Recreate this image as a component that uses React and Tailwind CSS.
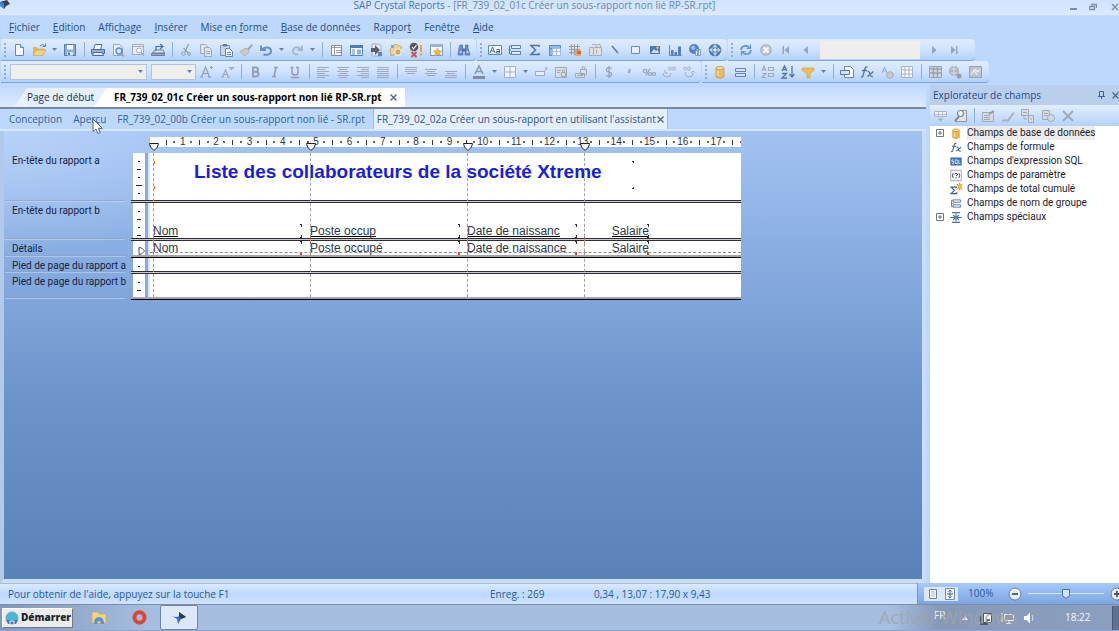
import React, { useState } from "react";
import clsx from "clsx";

const BLUE = "#4a78b8";
const DARK = "#2f5a94";
const GRAY = "#98a1ae";

// Lines of text as drawn by the alignment icons
const lines = (rows, color = GRAY) => (
  <g stroke={color} strokeWidth="1">
    {rows.map(([y, x1, x2]) => (
      <path key={y} d={`M${x1} ${y}.5H${x2}`} />
    ))}
  </g>
);

// 16x16 drawings
const ICONS = {
  new: (
    <>
      <path d="M4.5 2.5h5l3 3v8h-8z" fill="#fff" stroke={BLUE} />
      <path d="M9.5 2.5v3h3" fill="#cfe0f7" stroke={BLUE} />
    </>
  ),
  open: (
    <>
      <path d="M2 13V5h4l1 1.500h6V9z" fill="#e8b040" />
      <path d="M2 13.500 5 8h10l-3 5.500z" fill="#fbd26a" stroke="#d79a28" strokeWidth=".7" />
      <path d="M9 4q3-3 5 0M14.500 1.500V4.500h-3" fill="none" stroke={BLUE} />
    </>
  ),
  save: (
    <>
      <path d="M2.500 2.500h11v11h-11z" fill="#7fa3d6" stroke="#44699f" />
      <path d="M5 3h6v4.500H5z" fill="#fff" />
      <path d="M5 10h6v3.500H5z" fill="#dfe8f5" />
      <path d="M6 10.500h2v2.500H6z" fill="#44699f" />
    </>
  ),
  print: (
    <>
      <path d="M5 2.500h7l-1.500 5h-7z" fill="#fff" stroke={DARK} />
      <path d="M1.500 7.500h13v4h-13z" fill="#8ba5cc" stroke={DARK} />
      <path d="M3.500 10.500h9l1 3h-11z" fill="#e6eefa" stroke={DARK} />
    </>
  ),
  preview: (
    <>
      <path d="M3.500 2.500h6l3 3v8h-9z" fill="#eef5ff" stroke="#7f9fce" />
      <circle cx="9" cy="9" r="3" fill="#cfe4fb" stroke={BLUE} strokeWidth="1.300" />
      <path d="m11 11.500 3 3" stroke="#c58b3a" strokeWidth="1.600" />
    </>
  ),
  previewGray: (
    <>
      <path d="M2.500 2.500h11v10h-11z" fill="#eef1f5" stroke={GRAY} />
      <path d="M3 4.500h10" stroke={GRAY} />
      <circle cx="9" cy="8.500" r="2.500" fill="#fff" stroke={GRAY} />
      <path d="m11 10.500 3 3" stroke={GRAY} strokeWidth="1.500" />
    </>
  ),
  export: (
    <>
      <path d="M2.500 11 5 8h8l1.500 3z" fill="#dce6f4" stroke="#5c6f8c" />
      <path d="M1.500 11.500h13v2h-13z" fill="#8fa3c2" stroke="#5c6f8c" />
      <path d="M6 9V4.500h6M10 2l3 2.500L10 7" fill="none" stroke={DARK} strokeWidth="1.200" />
    </>
  ),
  cut: (
    <g fill="none" stroke="#8b97a8">
      <path d="M10.500 2 7 10M5.500 6l5 5" strokeWidth="1.300" />
      <circle cx="5.500" cy="11.500" r="1.800" />
      <circle cx="11" cy="12" r="1.500" />
    </g>
  ),
  copy: (
    <g fill="#e3e4e8" stroke={GRAY}>
      <path d="M2.500 2.500h5l2 2v7h-7z" />
      <path d="M6.500 5.500h5l2 2v7h-7z" />
      <path d="M8 9.500h4M8 11.500h4" />
    </g>
  ),
  paste: (
    <>
      <path d="M2.500 3.500h9v10h-9z" fill="#c9d5e8" stroke="#6d84a9" />
      <path d="M5 2h4v2.500H5z" fill="#55698c" />
      <path d="M7.500 6.500h4l3 3v5h-7z" fill="#fff" stroke={BLUE} />
      <path d="M9 10.500h4M9 12.500h4" stroke={BLUE} />
    </>
  ),
  brush: (
    <>
      <path d="m9 7 4.500-5 1.500 1.500L10.500 8.500z" fill="#9a9faa" />
      <path d="M2 9.500 8 6l3.500 3.500L6.500 14z" fill="#d0c8ba" stroke="#aaa79f" />
    </>
  ),
  undo: <path d="M5.500 12.500c5 1 8-1 7.500-4C12.500 5 8 4.500 4 7M3 3.500V8h5" fill="none" stroke="#5580bd" strokeWidth="1.900" />,
  redo: <path d="M9 12.500c-5 0-6-3-4.500-5.500C6 4.500 9 5 12 7M13 3.500V8H8.500" fill="none" stroke="#a5afbe" strokeWidth="1.900" />,
  grid: (
    <>
      <path d="M3.500 3.500h10v10h-10z" fill="#fff" stroke="#7d7c80" />
      <path d="M3 5.500h11M6.500 3v11M8 8.500h5M8 10.500h5" stroke="#8c8f98" />
    </>
  ),
  explorer: (
    <>
      <path d="M2.500 3.500h12v10h-12z" fill="#fff" stroke={BLUE} />
      <path d="M2 3h13v3H2z" fill="#3c68ab" />
      <path d="M4 8h3M4 10h3M4 12h3" stroke={BLUE} />
      <path d="M9 7.500h4v5H9z" fill="#7fa8df" />
    </>
  ),
  dbArrow: (
    <>
      <path d="M4 2h7l2 2v10H4z" fill="#e9edf3" stroke="#9aa5b5" />
      <path d="M3 6h4V3l5 5-5 5v-3H3z" fill="#4a4a50" />
      <path d="M10 10h4v4h-4z" fill={BLUE} />
    </>
  ),
  wizard: (
    <>
      <path d="m2 7 5-5 7 3-4 6-7 3z" fill="#f0cf86" stroke="#b38d48" strokeWidth=".7" />
      <circle cx="10" cy="10" r="3.300" fill="#e0a030" stroke="#fff" />
      <path d="M3 3h3v3H3z" fill="#7f96bb" />
    </>
  ),
  check: (
    <>
      <circle cx="6" cy="5" r="4.300" fill="#3d3f42" />
      <path d="m4 5 1.500 2L8.500 3" fill="none" stroke="#fff" strokeWidth="1.200" />
      <path d="m3.500 10 5 5M8.500 10l-5 5" stroke="#d83a27" strokeWidth="2" />
      <path d="M13 3v7M13 11.500v2" stroke="#e69a1e" strokeWidth="2" />
    </>
  ),
  starWindow: (
    <>
      <path d="M2.500 2.500h12v11h-12z" fill="#fff" stroke="#6b87b5" />
      <path d="M2 2h13v3H2z" fill="#8fa9d2" />
      <path d="m9.500 6 1.300 2.600 2.900.4-2.100 2 .5 2.900-2.600-1.400-2.600 1.400.5-2.900-2.100-2 2.900-.4z" fill="#f2b21d" stroke="#d98a15" strokeWidth=".5" />
    </>
  ),
  find: (
    <>
      <path d="M4 3h2.500v3L7 13H2l1-7zM9.500 3H12v3l2 7H9l.5-7z" fill="#5f80b8" stroke={DARK} strokeWidth=".7" />
      <path d="M6 6.500h4v3H6z" fill="#3b5f99" />
      <path d="M3.500 10h2M10.500 10h2" stroke="#cfe0f7" strokeWidth="1.500" />
    </>
  ),
  textObj: (
    <>
      <path d="M1.500 3.500h13v9h-13z" fill="#fff" stroke={BLUE} />
      <path d="m3 11 2.500-6L8 11M4 9h3" fill="none" stroke={DARK} />
      <path d="M9.500 7.500h3V11h-3V9.500h3" fill="none" stroke={DARK} />
    </>
  ),
  group: (
    <>
      <path d="M4.500 3.500h9v3h-9zM4.500 9.500h9v3h-9z" fill="#e6effb" stroke="#4b6da4" />
      <path d="M4 8H1.500M2.500 4v8M4.500 4H2.500M4.500 12H2.500" stroke="#4b6da4" />
    </>
  ),
  sigma: <path d="M12 5V3.500H4L8.500 8 4 12.500h8V11" fill="none" stroke="#41618f" strokeWidth="1.500" />,
  crossTab: (
    <>
      <path d="M2.500 6.500v7h3v-7zM2.500 3.500h11v3h-11z" fill="#8fb2e3" stroke={BLUE} />
      <path d="M5.500 6.500h8v7h-8zM5.500 9.500h8M9.500 6.500v7" fill="#fff" stroke="#9ab6de" />
    </>
  ),
  olap: (
    <>
      <path d="M2 4.500h11M2 7.500h11M2 10.500h11M4.500 2v11M7.500 2v11M10.500 2v11" stroke="#a08a7c" />
      <path d="M8 8h6v6H8z" fill="#f0a52a" />
      <path d="M10 9h4v3h-4z" fill="#dd4c2c" />
    </>
  ),
  cubeGray: (
    <g fill="#e2dfdb" stroke="#a8a5a3">
      <path d="M2.500 5.500h4v8h-4z" />
      <path d="M6.500 5.500h8v8h-8zM5 2.500h4l1 3M10 2.500h3l1 3M9.500 7.500v4" />
    </g>
  ),
  line: <path d="m5 4 6 7" stroke="#4667a3" strokeWidth="1.500" />,
  box: <path d="M4.500 4.500h8v7h-8z" fill="#eaf3ff" stroke="#557db8" />,
  picture: (
    <>
      <path d="M3 4h10v8H3z" fill="#3f6299" />
      <path d="m4 11 3-4 2 2 1.500-1.500L12 11z" fill="#cfe0f5" />
      <circle cx="10.500" cy="5.800" r="1.200" fill="#f4c63c" />
    </>
  ),
  chart: (
    <>
      <path d="M2.500 3v10.500h12" fill="none" stroke={BLUE} />
      <path d="M4 8h2.500v5H4zM7.500 10H10v3H7.500zM11 4.500h3V13h-3z" fill="#416fb5" />
    </>
  ),
  map: (
    <>
      <circle cx="7" cy="7" r="5" fill="#3e71b6" />
      <path d="M4 5q3-3 4 0t-3 3zM9 7l3 1-2 3z" fill="#9bbbe3" />
      <path d="M8.500 8.500h2v5h-2zM11.500 7.500h2v6h-2z" fill="#fff" stroke="#587cae" strokeWidth=".8" />
    </>
  ),
  flash: (
    <>
      <circle cx="8" cy="8" r="6.300" fill="#3f679d" />
      <path d="m8 2 2.500 3.500h-5zM8 14l-2.500-3.500h5zM2 8l3.500-2.500v5zM14 8l-3.500 2.500v-5z" fill="#b9cfeb" />
      <circle cx="8" cy="8" r="1.800" fill="#e8f1fc" />
    </>
  ),
  refresh: (
    <g fill="none" stroke="#568bc9" strokeWidth="1.800">
      <path d="M3 8q1-5 6-4l3 2M13 8q-1 5-6 4l-3-2" />
      <path d="M12.500 2.500V6.500h-4M3.500 13.500V9.500h4" strokeWidth="1.200" />
    </g>
  ),
  stop: (
    <>
      <circle cx="8" cy="8" r="5.800" fill="#a3a8b0" />
      <circle cx="8" cy="8" r="4.500" fill="#c3c6cc" />
      <path d="m5.500 5.500 5 5M10.500 5.500l-5 5" stroke="#fff" strokeWidth="1.800" />
    </>
  ),
  first: <path d="M4.500 4v8H6V4zM11 4v8L6.500 8z" fill="#8f9bb0" />,
  prev: <path d="M10 4v8L5.500 8z" fill="#8f9bb0" />,
  next: <path d="M6 4v8l4.500-4z" fill="#8f9bb0" />,
  last: <path d="M5 4v8l4.500-4zM10 4v8h1.500V4z" fill="#8f9bb0" />,
  fontUp: <path d="m2.500 13 4-10 4 10M4 9.500h5M1 13h3M9 13h3M12.500 2v3M11 3.500h3" fill="none" stroke="#8893a2" strokeWidth="1.200" />,
  fontDown: <path d="m3.500 13 3-7 3 7M5 10.500h3M2 13h3M8 13h3M10.500 3.500h4l-2 2z" fill="none" stroke="#98a1ae" strokeWidth="1.100" />,
  bold: <path d="M5 3.500h3.500q2.500 0 2.500 2T8.500 7.800H6M8.500 7.800q3 0 3 2.300T8.500 12.500H5M6 3.500v9" fill="none" stroke="#8a94a2" strokeWidth="1.900" />,
  italic: <path d="M7 3.500h4M5 12.500h4M9 3.500l-2 9" fill="none" stroke="#8a94a2" strokeWidth="1.600" />,
  underline: <path d="M3.500 3.500h3M9 3.500h3M5 3.500v5q0 2.500 3 2.500t3-2.500v-5M4 13.500h8" fill="none" stroke="#8a94a2" strokeWidth="1.400" />,
  alignL: lines([[3, 2, 14], [5, 2, 10], [7, 2, 14], [9, 2, 10], [11, 2, 14], [13, 2, 10]]),
  alignC: lines([[3, 2, 14], [5, 4, 12], [7, 2, 14], [9, 4, 12], [11, 2, 14], [13, 4, 12]]),
  alignR: lines([[3, 2, 14], [5, 6, 14], [7, 2, 14], [9, 6, 14], [11, 2, 14], [13, 6, 14]]),
  justify: lines([[3, 2, 14], [5, 2, 14], [7, 2, 14], [9, 2, 14], [11, 2, 14], [13, 2, 14]]),
  top: lines([[3, 2, 14], [5, 2, 14], [7, 2, 14], [9, 4, 12]]),
  middle: lines([[5, 2, 14], [7, 4, 12], [9, 2, 14], [11, 4, 12]]),
  bottom: lines([[7, 2, 14], [9, 4, 12], [11, 2, 14], [13, 2, 14]]),
  fontColor: (
    <>
      <path d="m4 10 4-8 4 8M5.500 7.500h5" fill="none" stroke="#7f8a99" strokeWidth="1.600" />
      <path d="M2 12h12v3H2z" fill="#77818f" />
    </>
  ),
  borders: <path d="M2.500 2.500h11v11h-11zM8 3v10M3 8h10" fill="#f5f8fc" stroke="#9fa9b7" />,
  suppress: <path d="M2.500 7.500h9v4h-9zM11 8l3-4M12 4h3" fill="#eef1f5" stroke={GRAY} />,
  lock: (
    <g stroke={GRAY} fill="#dcdddf">
      <path d="M2.500 3.500h11v10h-11z" />
      <path d="M4 6.500h4M4 8.500h3M8.500 8.500h4v4h-4zM9.500 8V6h2v2" />
    </g>
  ),
  lockSize: (
    <g stroke={GRAY} fill="#dcdddf">
      <path d="M2.500 9.500h9v4h-9zM7.500 5.500h6v5h-6zM9 5V3h3v2" />
      <path d="M4 11.500h6" />
    </g>
  ),
  dollar: <path d="M11 5q-1-1.500-3-1.500T5.500 5.500 8 8t2.500 2.500-2.500 2T5 11M8 2v12" fill="none" stroke="#8c96a5" strokeWidth="1.200" />,
  comma: <path d="M8.500 5v2L7.500 9" fill="none" stroke="#8c96a5" strokeWidth="1.800" />,
  percent: (
    <g fill="none" stroke="#8c96a5" strokeWidth="1.100">
      <circle cx="4" cy="7" r="1.700" />
      <circle cx="9" cy="10" r="1.500" />
      <circle cx="13" cy="10" r="1.500" />
      <path d="m9 4.500-4 7" />
    </g>
  ),
  decUp: (
    <g fill="none" stroke="#a0a8b4">
      <circle cx="9" cy="4.500" r="1.500" />
      <circle cx="13" cy="4.500" r="1.500" />
      <path d="M4 6v3M2 9q0 4 4 4t4-4M4 9h3" />
    </g>
  ),
  decDown: (
    <g fill="none" stroke="#a0a8b4">
      <circle cx="4" cy="4.500" r="1.500" />
      <circle cx="8" cy="4.500" r="1.500" />
      <path d="M4 8q0 5 4 5t4-4M10 9l2-2 2 2" />
    </g>
  ),
  database: (
    <>
      <path d="M4 4v9q4 2.500 8 0V4z" fill="#f3b544" stroke="#cf8a23" strokeWidth=".8" />
      <ellipse cx="8" cy="4" rx="4" ry="1.700" fill="#fbe0a0" stroke="#cf8a23" strokeWidth=".8" />
      <path d="M6 7v5" stroke="#fde6b0" strokeWidth="1.200" />
    </>
  ),
  section: <path d="M3.500 4.500h10v3h-10zM3.500 9.500h10v3h-10z" fill="#d9e5f6" stroke="#5574a4" />,
  sortGroup: (
    <g fill="none" stroke="#98a1ae" strokeWidth="1.100">
      <path d="m2 7 2-5 2 5M3 5.500h2M2 9.500h4l-4 4h4" />
      <path d="M8.500 3.500h5v3h-5zM8.500 9.500h5v3h-5z" />
    </g>
  ),
  sort: <path d="m2 7 2.500-5L7 7M3 5.500h3M2 9.500h4.500l-4.500 4.500h5M12 2v10M9.500 10l2.500 3 2.500-3" fill="none" stroke="#3d669f" strokeWidth="1.300" />,
  filter: <path d="M2 4h12v2.500L10 9.500V14H7V9.500L2 6.500z" fill="#f3b82e" stroke="#d4942a" strokeWidth=".6" />,
  sectionExpert: (
    <>
      <path d="M5.500 2.500h6l3 3v8h-9z" fill="#fff" stroke="#5b78a6" />
      <path d="M1.500 6.500h9v4h-9z" fill="#d6e3f6" stroke="#3f659e" />
    </>
  ),
  fx: <path d="M2 13q2 .5 2.500-3L6 4.500Q6.500 2.500 8.500 3M3 6.500h5M8.500 7.500q2-.5 2.500 2.500t3 2.500M14.500 7.500l-6 5" fill="none" stroke="#41618f" strokeWidth="1.300" />,
  highlight: (
    <>
      <path d="m3 9 2.500-6L8 9M4 7h3" fill="none" stroke="#98a1ae" />
      <circle cx="11" cy="11" r="3.300" fill="#c9c6c0" stroke="#aaa7a2" />
    </>
  ),
  template: <path d="M2.500 2.500h11v11h-11zM2.500 6h11M2.500 10h11M6 2.500v11M10 2.500v11" fill="#fff" stroke="#a3acba" />,
  sheet: (
    <>
      <path d="M2.500 2.500h12v11h-12z" fill="#d4d6db" stroke="#8f98a6" />
      <path d="M2.500 5h12M6.500 3v10M10.500 3v10M2.500 9h12" stroke="#8f98a6" strokeWidth="1.400" />
    </>
  ),
  globeGray: (
    <>
      <circle cx="7" cy="7" r="5" fill="#a7abb2" />
      <path d="M4 5h6M4 9h6M7 2v10" stroke="#dcdfe4" />
      <circle cx="12" cy="12" r="2.500" fill="#8f949c" />
    </>
  ),
  replace: (
    <>
      <path d="M2.500 2.500h12v11h-12z" fill="#b9bdc5" stroke="#9299a4" />
      <path d="m4 11 3-5 3 5M8 5l3 3 2-3" fill="none" stroke="#f1f3f6" strokeWidth="1.300" />
    </>
  ),
  insertField: (
    <>
      <path d="M2.500 3.500h12v5h-12z" fill="#f2f4f7" stroke="#a5abb5" />
      <path d="M3 6.500h11M6.500 4v4M10.500 4v4" stroke="#b5bac3" />
      <path d="M5.500 10.500h6l-3 3z" fill="#a0a7b2" />
    </>
  ),
  browse: (
    <>
      <path d="M9 2.500h5.500v11H3" fill="#e4e7eb" stroke="#85898f" />
      <circle cx="8.500" cy="5.500" r="3" fill="#f7f8fa" stroke="#77797e" strokeWidth="1.200" />
      <path d="M7 8.500 3 13" stroke="#77797e" strokeWidth="2" />
    </>
  ),
  newField: (
    <>
      <path d="M2.500 4.500h11v9h-11z" fill="#dadcdf" stroke={GRAY} />
      <path d="M4 7.500h6M4 9.500h6M4 11.500h6" stroke={GRAY} />
      <path d="m9 6 5-3" stroke="#868e9a" strokeWidth="1.600" />
    </>
  ),
  edit: <path d="M2 12.500h6l6-8" fill="none" stroke="#a3a9b2" strokeWidth="2" />,
  rename: (
    <g fill="#dadcdf" stroke={GRAY}>
      <path d="M1.500 1.500h7v6h-7zM8.500 7.500h5v7h-5z" />
      <path d="M3 4.500h4M10 11h2M4 8v3h3" />
    </g>
  ),
  duplicate: (
    <g fill="#d8dadd" stroke={GRAY}>
      <path d="M2.500 2.500h7v9h-7z" />
      <path d="M4 5.500h4M4 7.500h4" />
      <circle cx="11" cy="10" r="3.500" />
    </g>
  ),
  del: <path d="m3 3 10 10M13 3 3 13" stroke="#9aa0a9" strokeWidth="1.900" />,
  sql: (
    <>
      <path d="M1 3h14v10H1z" fill="#3f74b8" />
      <path d="M5 6H3v2h2v2.500H3M7 6h2.500v4.500H7zM9 10l1 1.500M11.500 6v4.500h2" fill="none" stroke="#e4eefb" />
    </>
  ),
  param: (
    <>
      <path d="M1.500 1.500h13v13h-13z" fill="#fdfdff" stroke="#8f97ab" />
      <path d="M4.500 5q-2 3 0 6M11.500 5q2 3 0 6M6.500 6Q8 4.500 9.500 6T8 8.500M8 10v1.500" fill="none" stroke="#3d4461" strokeWidth="1.200" />
    </>
  ),
  total: (
    <>
      <path d="M8.500 6V5H2l4 4-4 4h7v-1.500" fill="none" stroke="#3f5f91" strokeWidth="1.500" />
      <path d="M10 2h5v5h-5z" fill="#f5b52b" />
      <path d="M9 1l1.500 1.500M16 1l-1.500 1.500M9 8l1.500-1.500M16 8l-1.500-1.500M12.500 0v2M12.500 7v2" stroke="#d85c2a" strokeWidth="1.200" />
    </>
  ),
  special: (
    <>
      <path d="M3 2h10M3 14h10M8 3v10" stroke="#55709b" strokeWidth="1.300" />
      <path d="M1 8h14M4.500 5l3 3-3 3M11.500 5l-3 3 3 3" fill="none" stroke="#3f659e" strokeWidth="1.500" />
      <circle cx="8" cy="8" r="2.200" fill="#5f86bd" />
    </>
  ),
};

const Icon = ({ name }) => (
  <svg viewBox="0 0 16 16" className="w-4 h-4 shrink-0 opacity-85" aria-hidden="true">
    {ICONS[name]}
  </svg>
);

const IconButton = ({ name }) => (
  <button aria-label={name} className="w-5 h-5 shrink-0 flex items-center justify-center">
    <Icon name={name} />
  </button>
);

const Arrow = () => (
  <button aria-label="menu" className="w-[11px] h-5 shrink-0 flex items-center justify-center">
    <svg viewBox="0 0 5 3" className="w-[5px] h-[3px]">
      <path d="M0 0h5L2.500 3z" fill="#6580a8" />
    </svg>
  </button>
);

const Sep = () => (
  <span className="w-2 shrink-0 flex justify-center">
    <span className="w-px h-[15px] bg-[#8fb0dc]" />
  </span>
);

const Grip = () => (
  <span className="w-2 shrink-0 flex flex-col items-center gap-[2px]">
    {[0, 1, 2, 3].map((i) => (
      <span key={i} className="w-[2px] h-[2px] bg-[#8eabd6]" />
    ))}
  </span>
);

// "|" is a separator and "v" a small menu arrow
const Tools = ({ items }) =>
  items.split(" ").map((item, i) => {
    if (item === "|") return <Sep key={i} />;
    if (item === "v") return <Arrow key={i} />;
    return <IconButton key={i} name={item} />;
  });

const Bar = ({ children }) => (
  <div className="h-[22px] shrink-0 flex items-center pr-[2px] rounded-r-[4px] border-b border-[#7fa6dc] bg-gradient-to-b from-[#dfecff] via-[#cfe2ff] to-[#b3d0fb]">
    {children}
  </div>
);

const MENUS = [
  ["", "F", "ichier"],
  ["", "E", "dition"],
  ["Affic", "h", "age"],
  ["", "I", "nsérer"],
  ["Mise en ", "f", "orme"],
  ["", "B", "ase de données"],
  ["Rappor", "t", ""],
  ["Fenêt", "r", "e"],
  ["", "A", "ide"],
];

const FIELDS = [
  { label: "Champs de base de données", icon: "database", node: true },
  { label: "Champs de formule", icon: "fx" },
  { label: "Champs d'expression SQL", icon: "sql" },
  { label: "Champs de paramètre", icon: "param" },
  { label: "Champs de total cumulé", icon: "total" },
  { label: "Champs de nom de groupe", icon: "group" },
  { label: "Champs spéciaux", icon: "special", node: true },
];

function Header() {
  return (
    <header className="shrink-0">
      <div className="relative h-4 flex items-start justify-center bg-gradient-to-b from-[#cfe2ff] to-[#dceaff] border-b border-[#c6dbf8]">
        <svg viewBox="0 0 10 9" className="absolute left-0 top-0 w-[10px] h-[9px]" aria-hidden="true">
          <path d="M0 2 7 0l3 4-4 2-2 3z" fill="#3c3f46" />
          <path d="M0 2l4 1v6L0 6z" fill="#3f86d8" />
        </svg>
        <h1 className="mr-[50px] text-[10px] leading-[10px] text-[#6d87ad]">
          <span className="text-[#4673b3]">SAP Crystal Reports</span> - [FR_739_02_01c Créer un sous-rapport non lié RP-SR.rpt]
        </h1>
        <div className="absolute right-0 top-0 flex text-[#7c8da8]">
          <button aria-label="Réduire" className="w-5 h-[14px] flex items-end justify-center pb-1">
            <span className="w-[7px] h-[2px] bg-[#7c8da8]" />
          </button>
          <button aria-label="Restaurer" className="w-5 h-[14px] flex items-center justify-center">
            <svg viewBox="0 0 8 8" className="w-2 h-2">
              <path d="M2 1.500h5.500V5M.5 3.500h5v3h-5z" fill="none" stroke="currentColor" strokeWidth="1.300" />
            </svg>
          </button>
          <button aria-label="Fermer" className="w-4 h-[14px] flex items-center justify-end">
            <svg viewBox="0 0 8 8" className="w-2 h-2">
              <path d="m1 1 6 6M7 1 1 7" stroke="currentColor" strokeWidth="1.500" />
            </svg>
          </button>
        </div>
      </div>

      <nav className="h-[23px] flex items-center gap-[13px] pl-[9px] text-[10px] text-[#274c86]">
        {MENUS.map(([before, key, after]) => (
          <button key={before + key + after}>
            {before}
            <u>{key}</u>
            {after}
          </button>
        ))}
      </nav>

      <div className="flex gap-[1px] pl-[1px]">
        <Bar>
          <Grip />
          <Tools items="new open v save | print preview previewGray export | cut copy paste brush undo v redo v | grid explorer dbArrow wizard check starWindow | find" />
        </Bar>
        <Bar>
          <Grip />
          <Tools items="textObj group sigma crossTab olap cubeGray line box picture chart map flash" />
        </Bar>
        <Bar>
          <Grip />
          <Tools items="refresh stop first prev" />
          <input aria-label="Page" className="w-[100px] h-[18px] mx-1 bg-[#eeeeec]" />
          <Tools items="next last" />
          <span className="w-[9px]" />
        </Bar>
      </div>

      <div className="flex gap-[1px] pl-[1px]">
        <Bar>
          <Grip />
          <select aria-label="Police" className="w-[137px] h-4 ml-[1px] bg-[#eeeeec] border border-[#b4c3d8] appearance-none" />
          <span className="-ml-[12px] mr-[5px] flex pointer-events-none">
            <Arrow />
          </span>
          <select aria-label="Taille" className="w-[45px] h-4 bg-[#eeeeec] border border-[#b4c3d8] appearance-none" />
          <span className="-ml-[12px] mr-[2px] flex pointer-events-none">
            <Arrow />
          </span>
          <Tools items="fontUp fontDown | bold italic underline | alignL alignC alignR justify | top middle bottom | fontColor v borders v suppress lock lockSize | dollar comma percent decUp decDown" />
        </Bar>
        <Bar>
          <Grip />
          <Tools items="database section | sortGroup sort filter v | sectionExpert fx highlight template | sheet globeGray replace" />
          <span className="w-[2px]" />
        </Bar>
      </div>
    </header>
  );
}

function DocumentTabs() {
  return (
    <div className="h-[25px] shrink-0 flex items-end pl-[14px] text-[10px] leading-[14px] border-b-2 border-[#7c8899] bg-gradient-to-b from-[#bcd8ff] to-[#dceaff]">
      <button className="h-[19px] flex">
        <svg viewBox="0 0 13 19" className="w-[13px] h-[19px]">
          <path d="M0 19 13 0v19z" fill="#e9f2ff" />
        </svg>
        <span className="h-[19px] pt-[2px] text-[#1d2c46] bg-[#e4efff]">Page de début</span>
      </button>
      <button className="h-[19px] flex font-bold text-black">
        <svg viewBox="0 0 20 19" className="w-5 h-[19px]">
          <path d="M0 0h20v19H0z" fill="#e4efff" />
          <path d="M0 19 11 2q1-2 4-2h5v19z" fill="#fff" />
        </svg>
        <span className="h-[19px] pt-[2px] bg-white">FR_739_02_01c Créer un sous-rapport non lié RP-SR.rpt</span>
        <span className="h-[19px] w-[23px] flex items-center justify-center bg-white">
          <CloseMark />
        </span>
      </button>
    </div>
  );
}

const CloseMark = () => (
  <svg viewBox="0 0 7 7" className="w-[7px] h-[7px]">
    <path d="m.5.5 6 6M6.500.5l-6 6" stroke="#4d6386" strokeWidth="1.200" />
  </svg>
);

function ViewTabs({ active, onSelect }) {
  const tabs = [
    "Conception",
    "Aperçu",
    "FR_739_02_00b Créer un sous-rapport non lié - SR.rpt",
    "FR_739_02_02a Créer un sous-rapport en utilisant l'assistant",
  ];
  return (
    <div className="relative h-[22px] shrink-0 flex items-start gap-[5px] pl-[6px] text-[10px] leading-[14px] text-[#33609f] bg-[#bcd8ff] border-b-2 border-[#d6e6fd]">
      {tabs.map((tab, i) => (
        <button
          key={tab}
          onClick={() => onSelect(i)}
          className={clsx(
            "h-5 flex items-center gap-px px-[3px] whitespace-nowrap",
            active === i && "bg-[#e3eeff] border-l border-r border-[#9dbce8] text-[#2d5592]"
          )}
        >
          {tab}
          {i === 3 && <CloseMark />}
        </button>
      ))}
      {/* Mouse pointer */}
      <svg viewBox="0 0 12 17" className="absolute left-[92px] top-[9px] w-3 h-[17px] z-10">
        <path d="M1 1v12.500l3-2.500 2 4.500 2.300-1-2-4.200h4z" fill="#fff" stroke="#5b6675" />
      </svg>
    </div>
  );
}

// One report field with its corner marks
const Field = ({ children, className, hot }) => (
  <span className={clsx("relative h-[14px] shrink-0 text-[12px] leading-[14px] text-[#2f3646] whitespace-nowrap", className)}>
    {children}
    <i className="absolute left-0 top-0 w-px h-[3px] bg-[#e0762e]" />
    <i className="absolute left-0 bottom-0 w-px h-[3px] bg-[#e0762e]" />
    <i className="absolute right-0 top-0 w-[2px] h-[3px] border-t border-r border-[#333]" />
    <i className={clsx("absolute right-0 bottom-0 w-[2px] h-[3px]", hot ? "bg-[#e0402e]" : "border-b border-r border-[#333]")} />
  </span>
);

const FieldRow = ({ names, underline, hot }) => (
  <div className="flex pl-[3px]">
    <Field className="w-[149px] mr-2" hot={hot}>
      <span className={underline}>{names[0]}</span>
    </Field>
    <Field className="w-[150px] mr-[7px]" hot={hot}>
      <span className={underline}>{names[1]}</span>
    </Field>
    <Field className="w-[110px] mr-[7px]" hot={hot}>
      <span className={underline}>{names[2]}</span>
    </Field>
    <Field className="w-[65px] text-right" hot={hot}>
      <span className={underline}>{names[3]}</span>
    </Field>
  </div>
);

const RULE = {
  even: "h-[3px] bg-[#cfcbd0] border-y border-[#2e2c33]",
  thick: "h-[3px] bg-[#a7a5aa] border-b border-black",
};

function Section({ label, height, rule = "even", marks = [], children }) {
  return (
    <section>
      <div className={clsx("flex", height)}>
        <div className="w-[128px] shrink-0 pt-[2px] pl-[7px] text-[10px] leading-3 text-[#14233f] font-[Roboto,'Liberation_Sans',sans-serif]">
          {label}
        </div>
        <div className="w-3 shrink-0 flex flex-col items-center gap-[7px] pt-2 overflow-hidden bg-white">
          {marks.map((w, i) => (
            <span key={i} className={clsx("h-px shrink-0 bg-[#222]", w)} />
          ))}
        </div>
        <div className="w-[5px] shrink-0 bg-[#86abe4] border-r-2 border-[#dbe8fb]" />
        <div className="flex-1 bg-white">{children}</div>
      </div>
      <div className="flex">
        <div className="w-[120px] mr-[6px] h-[2px] border-t border-b border-t-[#8f9fc0]/60 border-b-[#c4d8f4]/60" />
        <div className={clsx("flex-1", RULE[rule])} />
      </div>
    </section>
  );
}

const Marker = () => (
  <svg viewBox="0 0 10 10" className="w-[10px] h-[10px]">
    <path d="M.5 2.500h9L8.500 6 5 9.500 1.500 6z" fill="#fff" stroke="#222" />
  </svg>
);

function Ruler() {
  const dot = <span className="w-[2px] h-[2px] bg-[#666]" />;
  return (
    <div className="ml-[145px] w-[591px] h-[10px] relative">
      <div className="h-full overflow-hidden bg-white">
        <div className="w-[612px] h-full flex items-center pl-3">
          <div className="w-[600px] shrink-0 grid grid-cols-18 text-[10px] leading-[10px] text-[#333]">
            {Array.from({ length: 18 }, (_, i) => (
              <div key={i} className="grid grid-cols-4 items-center justify-items-center">
                <span className="w-px h-[5px] bg-[#333]" />
                {dot}
                {i < 17 && <span className="w-2 flex justify-center">{i + 1}</span>}
                {i < 17 && dot}
              </div>
            ))}
          </div>
        </div>
      </div>
      <div className="absolute left-[-1px] top-1 flex">
        <span className="w-[157px]"><Marker /></span>
        <span className="w-[157px]"><Marker /></span>
        <span className="w-[117px]"><Marker /></span>
        <Marker />
      </div>
    </div>
  );
}

function Design() {
  const S = "w-[2px]";
  const M = "w-1";
  return (
    <main className="flex-1 pt-[6px] border-[#c9dcf8] border-x-4 border-b-4 border-l-[#b3c9ea] bg-[radial-gradient(ellipse_260px_120px_at_0_0,#bdd6fbcc,transparent),linear-gradient(#a3c2f2,#7ca2d8_42%,#6c93ca_60%,#5a82b8)] font-['Liberation_Sans',Arial,sans-serif]">
      <div className="ml-[1px]">
        <Ruler />
        <div className="relative w-[736px] mt-[6px]">
          <Section label="En-tête du rapport a" height="h-[47px]" marks={[S, M, S, "w-[6px]", S]}>
            <div className="pt-2 pl-1">
              <div className="relative w-[480px] h-[28px] pl-10 font-bold text-[19px] leading-[22px] text-[#1a1fd6] whitespace-nowrap">
                Liste des collaborateurs de la société Xtreme
                <i className="absolute left-0 top-0 w-px h-[3px] bg-[#e0762e]" />
                <i className="absolute left-0 bottom-0 w-px h-[3px] bg-[#e0762e]" />
                <i className="absolute right-0 top-0 w-[2px] h-[2px] border-t border-r border-[#333]" />
                <i className="absolute right-0 bottom-0 w-[2px] h-[2px] border-b border-r border-[#333]" />
              </div>
            </div>
          </Section>
          <Section label="En-tête du rapport b" height="h-[35px]" marks={[S, M, S, M]}>
            <div className="pt-[21px]">
              <FieldRow names={["Nom", "Poste occup", "Date de naissanc", "Salaire"]} underline="border-b border-black inline-block h-[13px]" />
            </div>
          </Section>
          <Section label="Détails" height="h-[14px]" rule="thick" marks={[]}>
            <div className="relative">
              <FieldRow hot names={["Nom", "Poste occupé", "Date de naissance", "Salaire"]} />
              <div className="absolute inset-x-0 top-[11px] border-t border-dashed border-[#8a8a90]" />
              <svg viewBox="0 0 10 10" className="absolute left-[-14px] top-[6px] w-[10px] h-2">
                <path d="M2.500.5v9L6 8.500 9.500 5 6 1.500z" fill="#fff" stroke="#222" />
              </svg>
            </div>
          </Section>
          <Section label="Pied de page du rapport a" height="h-[13px]" marks={[S]} />
          <Section label="Pied de page du rapport b" height="h-[23px]" rule="thick" marks={[S, M]} />
          {/* Guidelines */}
          <div className="absolute left-[148px] top-0 bottom-[3px] flex pointer-events-none">
            <span className="w-[157px] border-l border-dashed border-[#a0a0a6]" />
            <span className="w-[157px] border-l border-dashed border-[#a0a0a6]" />
            <span className="w-[117px] border-l border-dashed border-[#a0a0a6]" />
            <span className="border-l border-dashed border-[#a0a0a6]" />
          </div>
        </div>
      </div>
    </main>
  );
}

function FieldExplorer() {
  return (
    <aside className="w-[189px] shrink-0 flex flex-col mt-[2px] bg-white">
      <div className="h-5 shrink-0 flex items-center pl-[3px] text-[10px] text-[#1f4a8c] bg-[#bacfee]">
        <h2 className="flex-1">Explorateur de champs</h2>
        <button aria-label="Épingler" className="mr-[7px]">
          <svg viewBox="0 0 7 8" className="w-[7px] h-2">
            <path d="M1.500 5V.5h4V5M0 5.500h7M3.500 5.500V8" fill="none" stroke="#3b5f99" />
          </svg>
        </button>
        <button aria-label="Fermer">
          <CloseMark />
        </button>
      </div>
      <div className="h-[21px] shrink-0 flex items-center bg-gradient-to-b from-[#e2eeff] to-[#b5d1fa]">
        <Tools items="insertField browse | newField edit rename duplicate del" />
      </div>
      <ul className="pl-[6px] text-[10px] leading-[14px] text-[#1c2230] font-[Roboto,'Liberation_Sans',sans-serif]">
        {FIELDS.map((field) => (
          <li key={field.label} className="h-[14px] flex items-center">
            <span className="w-[13px]">
              {field.node && (
                <svg viewBox="0 0 8 8" className="w-2 h-2">
                  <path d="M.5.5h7v7h-7zM2 4h4M4 2v4" fill="#fff" stroke="#6f7684" />
                </svg>
              )}
            </span>
            <svg viewBox="0 0 16 16" className="w-[14px] h-[13px] mr-1">
              {ICONS[field.icon]}
            </svg>
            <span className={clsx("whitespace-nowrap", field.icon === "database" && "bg-[#ececec]")}>{field.label}</span>
          </li>
        ))}
      </ul>
    </aside>
  );
}

function StatusBar() {
  const [zoom, setZoom] = useState(50);
  return (
    <div className="h-[22px] shrink-0 flex text-[10px] text-[#28599c] border-b border-[#7d8da6]">
      <div className="flex-1 flex items-center pl-2 border-t border-[#b0bccd] bg-gradient-to-b from-[#dbe9ff] via-[#bdd8ff] to-[#cfe2ff]">
        <span className="w-[482px]">Pour obtenir de l'aide, appuyez sur la touche F1</span>
        <span className="w-[104px]">Enreg. : 269</span>
        <span>0,34 , 13,07 : 17,90 x 9,43</span>
      </div>
      <div className="w-[202px] shrink-0 flex items-center pl-[6px] overflow-hidden border-l border-[#7598cb] bg-gradient-to-b from-[#a9c9f8] to-[#7ba5e3]">
        <button aria-label="Page" className="w-[17px] h-[14px] shrink-0 flex items-center justify-center bg-[#dae7fa]">
          <svg viewBox="0 0 10 12" className="w-[10px] h-3">
            <path d="M1.500 1.500h7v9h-7z" fill="#fff" stroke="#6c7f9c" />
            <path d="M3 4h4M3 6h4M3 8h4" stroke="#a5b5cc" />
          </svg>
        </button>
        <button aria-label="Ajuster" className="w-[17px] h-[14px] shrink-0 flex items-center justify-center bg-[#dae7fa]">
          <svg viewBox="0 0 10 12" className="w-[10px] h-3">
            <path d="M.5.5h9v11h-9z" fill="#eef4fc" stroke="#7a8aa5" />
            <path d="M5 2v8M2 6h6M3.500 3.500 5 2l1.500 1.500M3.500 8.500 5 10l1.500-1.500" fill="none" stroke="#4c6486" />
          </svg>
        </button>
        <span className="w-[27px] shrink-0 ml-[10px]">100%</span>
        <button aria-label="Zoom arrière" className="ml-[13px] shrink-0">
          <ZoomGlyph d="M4 7h6" />
        </button>
        <label className="relative w-[76px] h-[14px] mx-[6px] shrink-0 flex items-center">
          <span className="w-full h-px bg-[#d9e7fb]" />
          <svg viewBox="0 0 8 10" className="absolute left-[34px] top-[2px] w-2 h-[10px]">
            <path d="M.5.5h7v6L4 9.500.5 6.500z" fill="#cfe0f7" stroke="#4d6f9f" />
          </svg>
          <input
            type="range"
            aria-label="Zoom"
            value={zoom}
            onChange={(e) => setZoom(e.target.value)}
            className="absolute inset-0 w-full opacity-0"
          />
        </label>
        <button aria-label="Zoom avant" className="shrink-0">
          <ZoomGlyph d="M4 7h6M7 4v6" />
        </button>
      </div>
    </div>
  );
}

const ZoomGlyph = ({ d }) => (
  <svg viewBox="0 0 14 14" className="w-[14px] h-[14px]">
    <circle cx="7" cy="7" r="6" fill="#e4ecf7" stroke="#6f7f98" />
    <path d={d} stroke="#49566c" strokeWidth="1.800" />
  </svg>
);

function Taskbar() {
  return (
    <footer className="relative h-[26px] shrink-0 flex items-center bg-[#a5bddf] border-b border-[#86a8d3]">
      <div className="h-full flex items-center bg-gradient-to-r from-[#8298bb] to-[#a5bddf]">
        <button className="ml-[2px] w-[71px] h-5 flex items-center gap-[2px] pl-[2px] text-[10px] font-extrabold text-[#20242b] bg-[#ececec] border border-[#fff] border-b-[#777] border-r-[#777]">
          <svg viewBox="0 0 14 14" className="w-[14px] h-[14px] shrink-0">
            <circle cx="7" cy="7" r="6" fill="#45b9d2" stroke="#7e9fb5" />
            <path d="M1 9h12l-2 4H3z" fill="#4a7bbd" />
            <path d="M5 13v-3h4v3" fill="none" stroke="#e6f3fa" />
          </svg>
          Démarrer
        </button>
        <button aria-label="Explorateur" className="ml-[17px] w-[18px] flex justify-center">
          <svg viewBox="0 0 16 14" className="w-4 h-[14px]">
            <path d="M1 1h6l1 2h7v9H1z" fill="#f1d48a" stroke="#cda554" strokeWidth=".7" />
            <path d="M3 13q0-7 5-7t5 7h-3q0-3-2-3t-2 3z" fill="#5b93d0" />
          </svg>
        </button>
        <button aria-label="Opera" className="ml-[22px] w-[18px] flex justify-center">
          <svg viewBox="0 0 15 15" className="w-[15px] h-[15px]">
            <ellipse cx="7.500" cy="7.500" rx="5" ry="5.200" fill="none" stroke="#dd4636" strokeWidth="4" />
          </svg>
        </button>
      </div>
      <button aria-label="Crystal Reports" className="ml-[12px] w-[38px] h-full flex items-center justify-center bg-[#dce7f7] border border-[#6f86ab] rounded-[2px]">
        <svg viewBox="0 0 14 12" className="w-[14px] h-3">
          <path d="M0 4q5 2 7 0V0l7 5-5 2-3 5-1-5z" fill="#3d6fd0" />
          <path d="M7 0l7 5-5 2-2-3z" fill="#35383f" />
        </svg>
      </button>
      <div className="flex-1" />
      <div className="w-[226px] h-full flex items-center bg-gradient-to-r from-[#a5bddf] via-[#8699b8] via-20% to-[#8b9fc0] text-[10px] text-[#f2f6fc]">
        <span className="ml-[41px] mb-1 w-[28px]">FR</span>
        <svg viewBox="0 0 6 4" className="w-[6px] h-1 mr-[11px]">
          <path d="M0 4h6L3 0z" fill="#f2f6fc" />
        </svg>
        <svg viewBox="0 0 14 14" className="w-[14px] h-[14px] mr-[8px]">
          <path d="M4.500 2.500h8v9h-8z" fill="#f4f6f9" stroke="#4a5568" />
          <path d="M2 4v9h6V9h3" fill="none" stroke="#3c4453" strokeWidth="1.500" />
        </svg>
        <svg viewBox="0 0 14 14" className="w-[14px] h-[14px] mr-[8px]">
          <path d="M3.500 3.500h9v6h-9zM5 12.500h6M8 10v2" fill="#8d98a9" stroke="#e8ecf2" />
          <path d="M1 2v9" stroke="#d8d2b8" strokeWidth="1.500" />
        </svg>
        <svg viewBox="0 0 12 14" className="w-3 h-[14px]">
          <path d="M1 5h2.500L7 1.500v11L3.500 9H1z" fill="#f6f8fb" />
          <path d="M9 4q2 3 0 6" fill="none" stroke="#d3dbe8" />
        </svg>
        <span className="ml-[30px]">18:22</span>
      </div>
      <span className="absolute left-[879px] top-[2px] text-[18px] leading-5 text-[#a3a3a5]/80 whitespace-nowrap">Activer Windows</span>
      <span className="absolute right-0 top-[1px] w-[7px] h-6 bg-[#5f7191] border-l border-[#4b5873]" />
    </footer>
  );
}

function App() {
  const [activeView, setActiveView] = useState(3);

  return (
    <div className="min-h-screen flex flex-col overflow-hidden bg-[#bcd8ff] font-['Open_Sans','Noto_Sans',sans-serif]">
      <Header />
      <div className="flex-1 flex gap-1">
        <div className="flex-1 flex flex-col min-w-0 pt-[1px]">
          <DocumentTabs />
          <ViewTabs active={activeView} onSelect={setActiveView} />
          <Design />
        </div>
        <FieldExplorer />
      </div>
      <StatusBar />
      <Taskbar />
    </div>
  );
}

export default App;
